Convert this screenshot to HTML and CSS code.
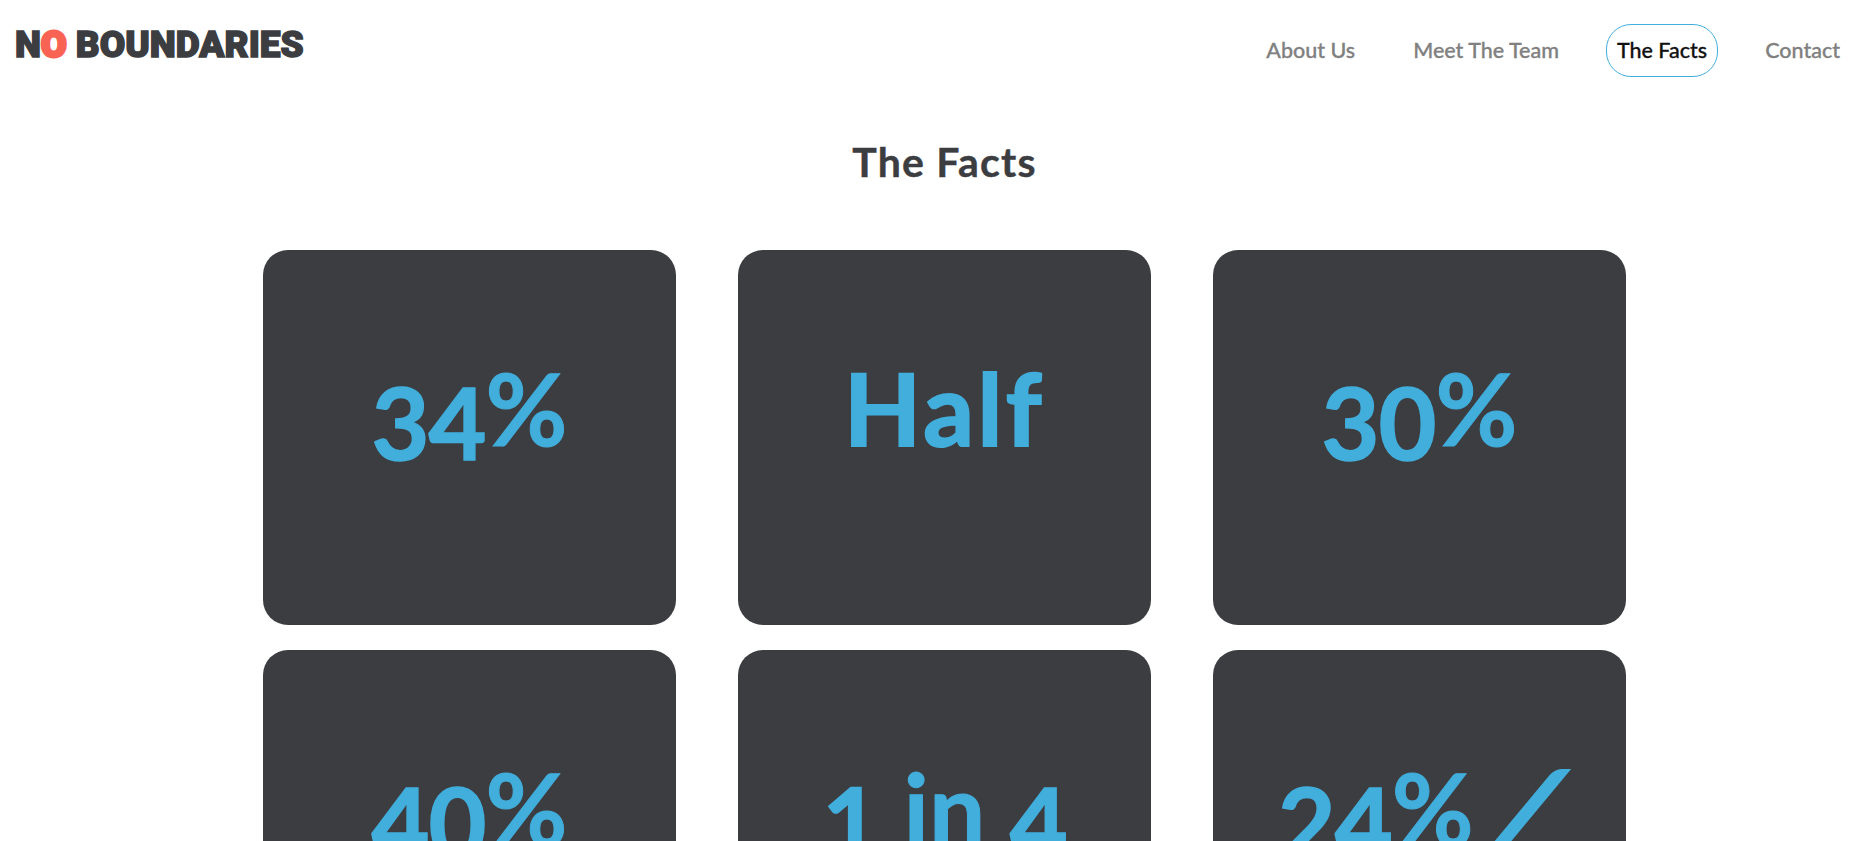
FILE: index.html
```html
<!DOCTYPE html>
<html lang="en">
<head>
    <meta charset="UTF-8">
    <meta name="viewport" content="width=device-width, initial-scale=1.0">
    <title>No Boundaries - The Facts</title>
    <link rel="stylesheet" href="styles.css">
</head>
<body>

    <header class="topbar">
        <a href="#" class="logo">N<span class="logo-o">o</span> Boundaries</a>
        <nav class="nav">
            <a href="#" class="nav-link">About Us</a>
            <a href="#" class="nav-link">Meet The Team</a>
            <a href="#" class="nav-link active">The Facts</a>
            <a href="#" class="nav-link">Contact</a>
        </nav>
    </header>

    <main class="content">
        <h2 class="page-title">The Facts</h2>

        <div class="facts">
            <div class="fact"><span class="num">34</span>%</div>
            <div class="fact word">Half</div>
            <div class="fact"><span class="num">30</span>%</div>
            <div class="fact"><span class="num">40</span>%</div>
            <div class="fact"><span class="num">1</span> in <span class="num">4</span></div>
            <div class="fact"><span class="num">24</span>% <span class="slash">/</span></div>
        </div>
    </main>

</body>
</html>
```

FILE: styles.css
```css
html, body {
    height: 841px;
    overflow: hidden;
}

body {
    font-family: 'Lato', 'Open Sans', sans-serif;
    background-color: #ffffff;
    color: #3c3d41;
    margin: 0;
    padding: 0;
}

.topbar {
    display: flex;
    justify-content: space-between;
    align-items: flex-start;
    height: 110px;
    padding: 0 8px 0 15px;
}

.logo {
    margin-top: 23px;
    font-family: 'Roboto', sans-serif;
    font-weight: 900;
    font-size: 37px;
    line-height: 44px;
    text-transform: uppercase;
    color: #3c3d41;
    text-decoration: none;
    -webkit-text-stroke: 1.5px #3c3d41;
}

.logo-o {
    color: #f96353;
    -webkit-text-stroke: 3px #f96353;
}

.nav {
    display: flex;
    gap: 36px;
    margin-top: 24px;
}

.nav-link {
    padding: 0 10px;
    height: 51px;
    line-height: 50px;
    border: 1px solid transparent;
    border-radius: 25px;
    font-size: 21.5px;
    font-weight: 500;
    color: #808080;
    text-decoration: none;
    -webkit-text-stroke: 0.3px currentColor;
}

.nav-link.active {
    border-color: #41aedc;
    color: #111111;
}

/* page is off centre by 15px in the original */
.content {
    padding-left: 30px;
}

.page-title {
    margin: 0;
    height: 140px;
    text-align: center;
    font-size: 41px;
    font-weight: 700;
    letter-spacing: 1.2px;
    line-height: 104px;
    color: #3c3d41;
    -webkit-text-stroke: 0.4px #3c3d41;
}

.facts {
    display: grid;
    grid-template-columns: repeat(3, 413px);
    grid-auto-rows: 375px;
    gap: 25px 62px;
    justify-content: center;
}

.fact {
    box-sizing: border-box;
    padding-top: 107px;
    background-color: #3c3d41;
    border-radius: 25px;
    color: #41aedc;
    text-align: center;
    font-size: 100px;
    line-height: 100px;
    font-weight: 700;
    -webkit-text-stroke: 1px #41aedc;
}

.word {
    letter-spacing: 3.5px;
    -webkit-text-stroke: 2px #41aedc;
}

.num {
    vertical-align: -14px;
    letter-spacing: -1px;
    -webkit-text-stroke: 1.5px #41aedc;
}

.slash {
    display: inline-block;
    margin: 0 8px 0 8px;
    font-weight: 900;
    transform: skewX(-24deg);
    -webkit-text-stroke: 5px #41aedc;
}
```
